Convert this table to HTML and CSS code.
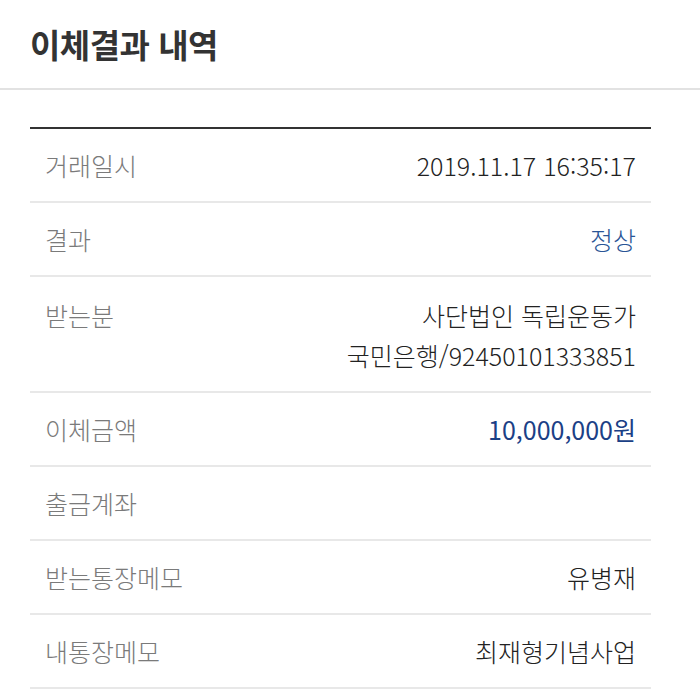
FILE: index.html
```html
<!DOCTYPE html>
<html lang="ko">
<head>
<meta charset="utf-8">
<title>이체결과 내역</title>
<link rel="stylesheet" href="styles.css">
</head>
<body>
<header class="header">
  <h1 class="title">이체결과 내역</h1>
</header>
<main class="content">
  <div class="table">
    <div class="row"><span class="label">거래일시</span><span class="value">2019.11.17 16:35:17</span></div>
    <div class="row"><span class="label">결과</span><span class="value blue">정상</span></div>
    <div class="row multi"><span class="label">받는분</span><span class="value">사단법인 독립운동가<br>국민은행/92450101333851</span></div>
    <div class="row"><span class="label">이체금액</span><span class="value blue strong">10,000,000원</span></div>
    <div class="row"><span class="label">출금계좌</span><span class="value"></span></div>
    <div class="row"><span class="label">받는통장메모</span><span class="value">유병재</span></div>
    <div class="row"><span class="label">내통장메모</span><span class="value">최재형기념사업</span></div>
  </div>
</main>
</body>
</html>
```
FILE: styles.css
```css
* { box-sizing: border-box; }
html, body { margin: 0; padding: 0; background: #fff; }
body {
  font-family: "Noto Sans CJK KR", "Noto Sans", sans-serif;
  color: #222;
}
.header {
  height: 90px;
  padding: 0 30px;
  border-bottom: 2px solid #e2e2e2;
  display: flex;
  align-items: center;
}
.title {
  margin: 0;
  font-size: 33px;
  font-weight: 700;
  color: #333;
  line-height: 40px;
  letter-spacing: -0.5px;
}
.content {
  padding: 37px 49px 0 30px;
}
.table {
  border-top: 2px solid #333;
}
.row {
  display: flex;
  justify-content: space-between;
  align-items: center;
  padding: 16px 15px;
  border-bottom: 2px solid #e8e8e8;
  font-size: 25px;
  line-height: 40px;
  min-height: 74px;
}
.row.multi {
  align-items: flex-start;
  padding: 18px 15px 16px;
}
.label {
  color: #7a7a7a;
  font-weight: 300;
}
.value {
  text-align: right;
  color: #222;
  font-weight: 300;
}
.blue { color: #2a5596; }
.strong { color: #1b4086; font-weight: 400; }
```
